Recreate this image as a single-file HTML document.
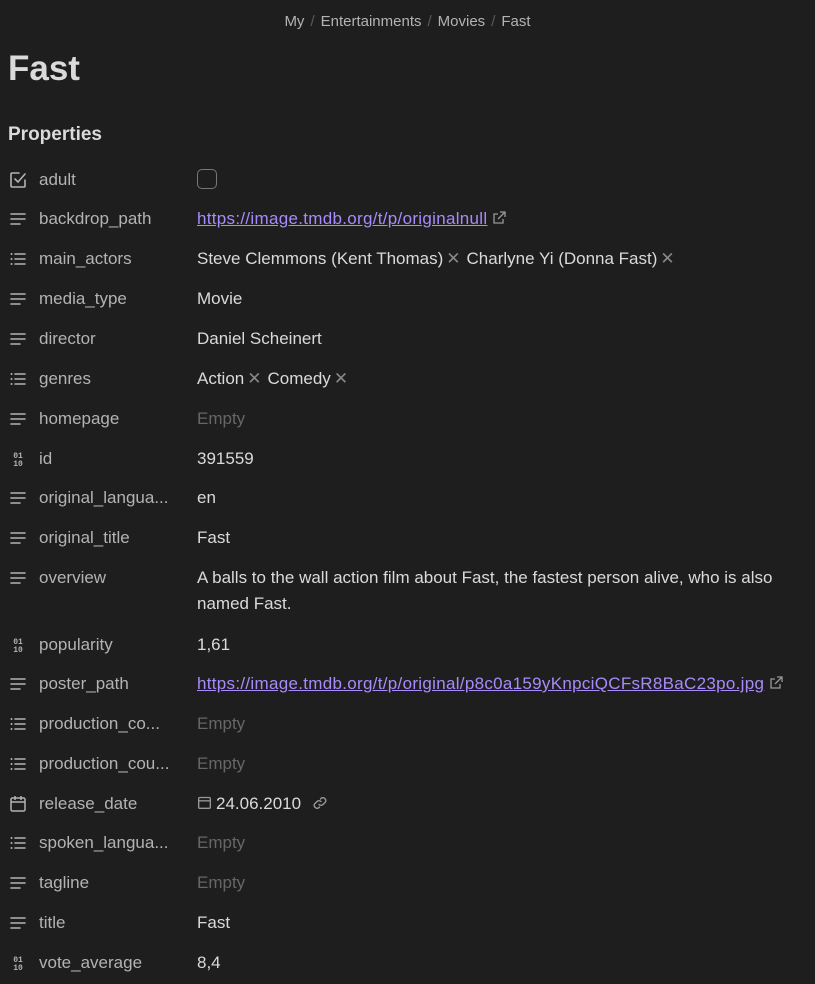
<!DOCTYPE html>
<html><head><meta charset="utf-8"><style>
*{margin:0;padding:0;box-sizing:border-box}
body{width:815px;height:984px;background:#1e1e1e;font-family:"Liberation Sans",sans-serif;color:#dadada;position:relative;overflow:hidden}
.bc{position:absolute;top:12px;left:0;width:815px;text-align:center;font-size:15px;color:#b3b3b3;line-height:20px}
.bc i{font-style:normal;color:#5a5a5a;margin:0 6px}
h1{position:absolute;left:8px;top:47px;font-size:35px;font-weight:bold;color:#dadada;line-height:44px}
h2{position:absolute;left:8px;top:123px;font-size:19px;font-weight:bold;color:#dadada;line-height:24px}
.r{position:absolute;left:0;width:815px;height:24px;line-height:24px;font-size:17px}
.r svg.ic{position:absolute;left:9px;top:3px}
.k{position:absolute;left:39px;color:#b3b3b3}
.v{position:absolute;left:197px;color:#dadada;white-space:nowrap}
.e{color:#666}
a{color:#a88bfa;text-decoration:underline;letter-spacing:0.3px}
.x{color:#888;margin:0 6px 0 3px}
.cb{display:inline-block;width:20px;height:20px;border:1.5px solid #777;border-radius:5px;vertical-align:middle;margin-top:-3px}
</style></head><body>
<svg width="0" height="0" style="position:absolute">
<defs>
<symbol id="t" viewBox="0 0 18 18"><path d="M2 4h14M2 9h14M2 14h9" stroke="#b3b3b3" stroke-width="1.6" fill="none" stroke-linecap="round"/></symbol>
<symbol id="l" viewBox="0 0 18 18"><path d="M6 4h10M6 9h10M6 14h10" stroke="#b3b3b3" stroke-width="1.6" fill="none" stroke-linecap="round"/><circle cx="2.5" cy="4" r="1" fill="#b3b3b3"/><circle cx="2.5" cy="9" r="1" fill="#b3b3b3"/><circle cx="2.5" cy="14" r="1" fill="#b3b3b3"/></symbol>
<symbol id="c" viewBox="0 0 18 18"><path d="M10 2H3a1 1 0 0 0-1 1v12a1 1 0 0 0 1 1h12a1 1 0 0 0 1-1V9" stroke="#b3b3b3" stroke-width="1.6" fill="none" stroke-linecap="round"/><path d="M6 8l3 3 7-8" stroke="#b3b3b3" stroke-width="1.6" fill="none" stroke-linecap="round"/></symbol>
<symbol id="n" viewBox="0 0 18 18"><text x="9" y="8" font-size="8" font-family="Liberation Mono" fill="#b3b3b3" text-anchor="middle" font-weight="bold">01</text><text x="9" y="16" font-size="8" font-family="Liberation Mono" fill="#b3b3b3" text-anchor="middle" font-weight="bold">10</text></symbol>
<symbol id="d" viewBox="0 0 18 18"><rect x="2" y="3" width="14" height="13" rx="1.5" stroke="#b3b3b3" stroke-width="1.5" fill="none"/><path d="M2 7h14M6 1v4M12 1v4" stroke="#b3b3b3" stroke-width="1.5"/></symbol>
<symbol id="ext" viewBox="0 0 14 14"><path d="M11 8v4H2V3h4M8 1h5v5M13 1L6 8" stroke="#999" stroke-width="1.3" fill="none"/></symbol>
</defs></svg>
<div class="bc">My<i>/</i>Entertainments<i>/</i>Movies<i>/</i>Fast</div>
<h1>Fast</h1>
<h2>Properties</h2>

<div class="r" style="top:168px"><svg class="ic" width="18" height="18"><use href="#c"/></svg><span class="k">adult</span><span class="v"><span class="cb"></span></span></div>
<div class="r" style="top:207px"><svg class="ic" width="18" height="18"><use href="#t"/></svg><span class="k">backdrop_path</span><span class="v"><a>https://image.tmdb.org/t/p/originalnull</a> <svg width="14" height="14" style="vertical-align:-1px"><use href="#ext"/></svg></span></div>
<div class="r" style="top:247px"><svg class="ic" width="18" height="18"><use href="#l"/></svg><span class="k">main_actors</span><span class="v">Steve Clemmons (Kent Thomas)<span class="x">✕</span>Charlyne Yi (Donna Fast)<span class="x">✕</span></span></div>
<div class="r" style="top:287px"><svg class="ic" width="18" height="18"><use href="#t"/></svg><span class="k">media_type</span><span class="v">Movie</span></div>
<div class="r" style="top:327px"><svg class="ic" width="18" height="18"><use href="#t"/></svg><span class="k">director</span><span class="v">Daniel Scheinert</span></div>
<div class="r" style="top:367px"><svg class="ic" width="18" height="18"><use href="#l"/></svg><span class="k">genres</span><span class="v">Action<span class="x">✕</span>Comedy<span class="x">✕</span></span></div>
<div class="r" style="top:407px"><svg class="ic" width="18" height="18"><use href="#t"/></svg><span class="k">homepage</span><span class="v e">Empty</span></div>
<div class="r" style="top:447px"><svg class="ic" width="18" height="18"><use href="#n"/></svg><span class="k">id</span><span class="v">391559</span></div>
<div class="r" style="top:486px"><svg class="ic" width="18" height="18"><use href="#t"/></svg><span class="k">original_langua...</span><span class="v">en</span></div>
<div class="r" style="top:526px"><svg class="ic" width="18" height="18"><use href="#t"/></svg><span class="k">original_title</span><span class="v">Fast</span></div>
<div class="r" style="top:566px;height:52px"><svg class="ic" width="18" height="18"><use href="#t"/></svg><span class="k">overview</span><span class="v" style="white-space:normal;width:610px;line-height:26px;top:-1px">A balls to the wall action film about Fast, the fastest person alive, who is also named Fast.</span></div>
<div class="r" style="top:633px"><svg class="ic" width="18" height="18"><use href="#n"/></svg><span class="k">popularity</span><span class="v">1,61</span></div>
<div class="r" style="top:672px"><svg class="ic" width="18" height="18"><use href="#t"/></svg><span class="k">poster_path</span><span class="v"><a>https://image.tmdb.org/t/p/original/p8c0a159yKnpciQCFsR8BaC23po.jpg</a> <svg width="14" height="14" style="vertical-align:-1px"><use href="#ext"/></svg></span></div>
<div class="r" style="top:712px"><svg class="ic" width="18" height="18"><use href="#l"/></svg><span class="k">production_co...</span><span class="v e">Empty</span></div>
<div class="r" style="top:752px"><svg class="ic" width="18" height="18"><use href="#l"/></svg><span class="k">production_cou...</span><span class="v e">Empty</span></div>
<div class="r" style="top:792px"><svg class="ic" width="18" height="18"><use href="#d"/></svg><span class="k">release_date</span><span class="v"><svg width="15" height="15" style="vertical-align:-1px;margin-right:4px" viewBox="0 0 18 18"><rect x="2" y="3" width="14" height="13" rx="1.5" stroke="#999" stroke-width="1.6" fill="none"/><path d="M2 7h14" stroke="#999" stroke-width="1.6"/></svg>24.06.2010 <svg width="16" height="16" viewBox="0 0 16 16" style="vertical-align:-2px;margin-left:6px"><path d="M7 9.5a3 3 0 0 0 4 0l2.5-2.5a3 3 0 0 0-4-4L8.5 4M9 6.5a3 3 0 0 0-4 0L2.5 9a3 3 0 0 0 4 4l1-1" stroke="#999" stroke-width="1.4" fill="none" stroke-linecap="round"/></svg></span></div>
<div class="r" style="top:831px"><svg class="ic" width="18" height="18"><use href="#l"/></svg><span class="k">spoken_langua...</span><span class="v e">Empty</span></div>
<div class="r" style="top:871px"><svg class="ic" width="18" height="18"><use href="#t"/></svg><span class="k">tagline</span><span class="v e">Empty</span></div>
<div class="r" style="top:911px"><svg class="ic" width="18" height="18"><use href="#t"/></svg><span class="k">title</span><span class="v">Fast</span></div>
<div class="r" style="top:951px"><svg class="ic" width="18" height="18"><use href="#n"/></svg><span class="k">vote_average</span><span class="v">8,4</span></div>
</body></html>
